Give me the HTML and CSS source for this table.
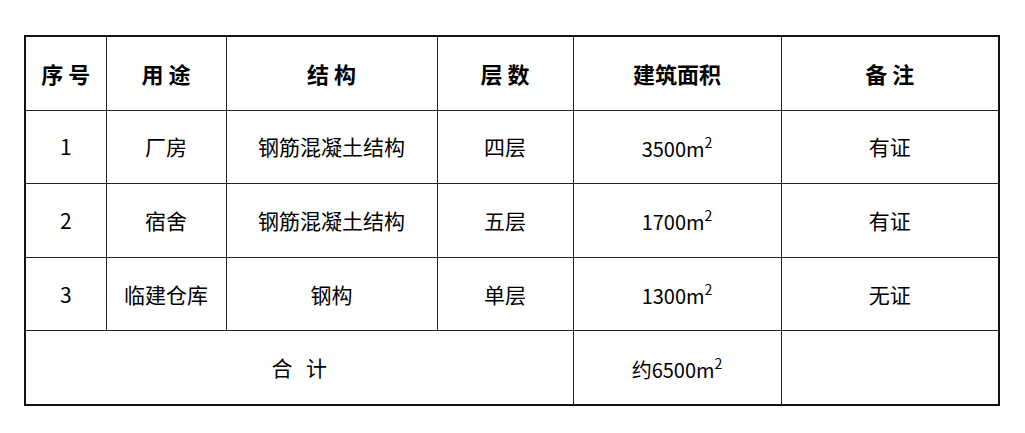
FILE: index.html
```html
<!DOCTYPE html>
<html lang="zh">
<head>
<meta charset="utf-8">
<link rel="stylesheet" href="styles.css">
</head>
<body>
<table class="grid">
  <colgroup>
    <col class="c1"><col class="c2"><col class="c3"><col class="c4"><col class="c5"><col class="c6">
  </colgroup>
  <tr class="head">
    <th>序 号</th><th>用 途</th><th>结 构</th><th>层 数</th><th>建筑面积</th><th>备 注</th>
  </tr>
  <tr>
    <td>1</td><td>厂房</td><td>钢筋混凝土结构</td><td>四层</td><td class="num">3500m<sup>2</sup></td><td>有证</td>
  </tr>
  <tr>
    <td>2</td><td>宿舍</td><td>钢筋混凝土结构</td><td>五层</td><td class="num">1700m<sup>2</sup></td><td>有证</td>
  </tr>
  <tr>
    <td>3</td><td>临建仓库</td><td>钢构</td><td>单层</td><td class="num">1300m<sup>2</sup></td><td>无证</td>
  </tr>
  <tr>
    <td colspan="4" class="sum">合 计</td><td class="num">约6500m<sup>2</sup></td><td></td>
  </tr>
</table>
</body>
</html>
```
FILE: styles.css
```css
html, body {
  margin: 0;
  padding: 0;
  background: #ffffff;
}
body {
  padding: 35px 0 0 24px;
  font-family: "Noto Sans CJK SC", "Noto Sans", sans-serif;
  color: #000;
}
.grid {
  border-collapse: collapse;
  border: 2px solid #111;
  table-layout: fixed;
  width: 974px;
}
.c1 { width: 81px; }
.c2 { width: 120px; }
.c3 { width: 211px; }
.c4 { width: 136px; }
.c5 { width: 208px; }
.c6 { width: 218px; }
.grid th, .grid td {
  border: 1.5px solid #222;
  text-align: center;
  vertical-align: middle;
  padding: 0;
  height: 72.6px;
  font-size: 21px;
  font-weight: normal;
  line-height: 1;
}
.grid th {
  font-size: 22px;
  font-weight: bold;
}
.grid td.num {
  font-size: 20px;
  line-height: 20px;
  padding-top: 4px;
  height: 68.6px;
}
.grid td.sum {
  word-spacing: 9px;
}
.grid td sup {
  font-size: 14px;
  vertical-align: 9px;
  line-height: 0;
}
```
